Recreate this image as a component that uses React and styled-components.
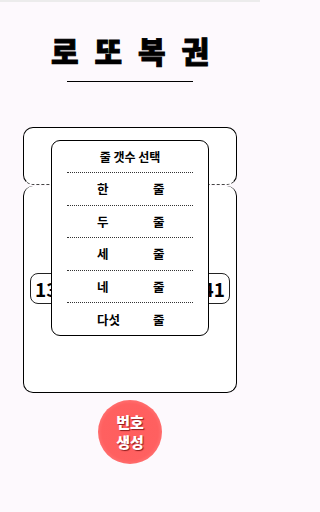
import React from 'react';
import styled, { createGlobalStyle } from 'styled-components';

const GlobalStyle = createGlobalStyle`
  html, body {
    margin: 0;
    padding: 0;
    background: #fdf9fd;
  }
  body {
    font-family: 'Noto Sans CJK KR', 'Noto Sans', sans-serif;
    color: #000;
  }
`;

const Page = styled.div`
  display: flex;
  flex-direction: column;
  align-items: center;
  width: 260px;
  min-height: 512px;
  box-sizing: border-box;
  border-top: 2px solid #ececec;
`;

const Title = styled.h1`
  margin: 28px 0 0;
  font-size: 30px;
  line-height: 40px;
  font-weight: 900;
  letter-spacing: 4.5px;
  padding-left: 4.5px;
  -webkit-text-stroke: 0.9px #000;
`;

const Divider = styled.div`
  width: 126px;
  border-top: 1.5px solid #000;
  margin-top: 11px;
`;

const Ticket = styled.div`
  position: relative;
  width: 214px;
  margin-top: 45px;
`;

const TicketTop = styled.div`
  box-sizing: border-box;
  height: 58px;
  background: #fff;
  border: 1px solid #000;
  border-bottom: 1px dashed #444;
  border-radius: 10px;
`;

const TicketBody = styled.div`
  box-sizing: border-box;
  height: 207px;
  margin-top: 1px;
  background: #fff;
  border: 1px solid #000;
  border-top: none;
  border-radius: 10px;
  padding-top: 87px;
`;

const NumberRow = styled.div`
  display: flex;
  justify-content: space-between;
  align-items: center;
  box-sizing: border-box;
  margin: 0 6px;
  height: 31px;
  padding: 0 4px;
  border: 1px solid #222;
  border-radius: 8px;
  font-size: 19px;
  font-weight: 700;
`;

const Modal = styled.div`
  position: absolute;
  left: 28px;
  top: 13px;
  width: 158px;
  box-sizing: border-box;
  background: #fff;
  border: 1px solid #000;
  border-radius: 9px;
  padding: 0 15px;
`;

const ModalTitle = styled.div`
  height: 31px;
  line-height: 31px;
  text-align: center;
  font-size: 12px;
  font-weight: 700;
  border-bottom: 1px dotted #333;
`;

const Option = styled.div`
  display: flex;
  height: 31.6px;
  align-items: center;
  font-size: 12.5px;
  font-weight: 700;
  border-bottom: ${(p) => (p.$last ? 'none' : '1px dotted #333')};
`;

const OptionCount = styled.span`
  width: 56px;
  padding-left: 30px;
`;

const OptionUnit = styled.span``;

const GenerateButton = styled.button`
  margin-top: 7px;
  width: 64px;
  height: 64px;
  border: none;
  border-radius: 50%;
  background: radial-gradient(circle, #ff5e5e 0%, #ff6060 62%, #ff8585 86%, #ffc4c4 100%);
  color: #fff;
  font-family: 'Noto Sans CJK KR', sans-serif;
  font-size: 15px;
  font-weight: 900;
  line-height: 20px;
  text-shadow: 1px 1px 1px rgba(90, 0, 0, 0.7);
  padding: 0;
  cursor: pointer;
`;

const lines = ['한', '두', '세', '네', '다섯'];
const numbers = [13, 41];

export default function App() {
  return (
    <Page>
      <GlobalStyle />
      <Title>로 또 복 권</Title>
      <Divider />
      <Ticket>
        <TicketTop />
        <TicketBody>
          <NumberRow>
            {numbers.map((n) => (
              <span key={n}>{n}</span>
            ))}
          </NumberRow>
        </TicketBody>
        <Modal>
          <ModalTitle>줄 갯수 선택</ModalTitle>
          {lines.map((l, i) => (
            <Option key={l} $last={i === lines.length - 1}>
              <OptionCount>{l}</OptionCount>
              <OptionUnit>줄</OptionUnit>
            </Option>
          ))}
        </Modal>
      </Ticket>
      <GenerateButton>
        번호
        <br />
        생성
      </GenerateButton>
    </Page>
  );
}
